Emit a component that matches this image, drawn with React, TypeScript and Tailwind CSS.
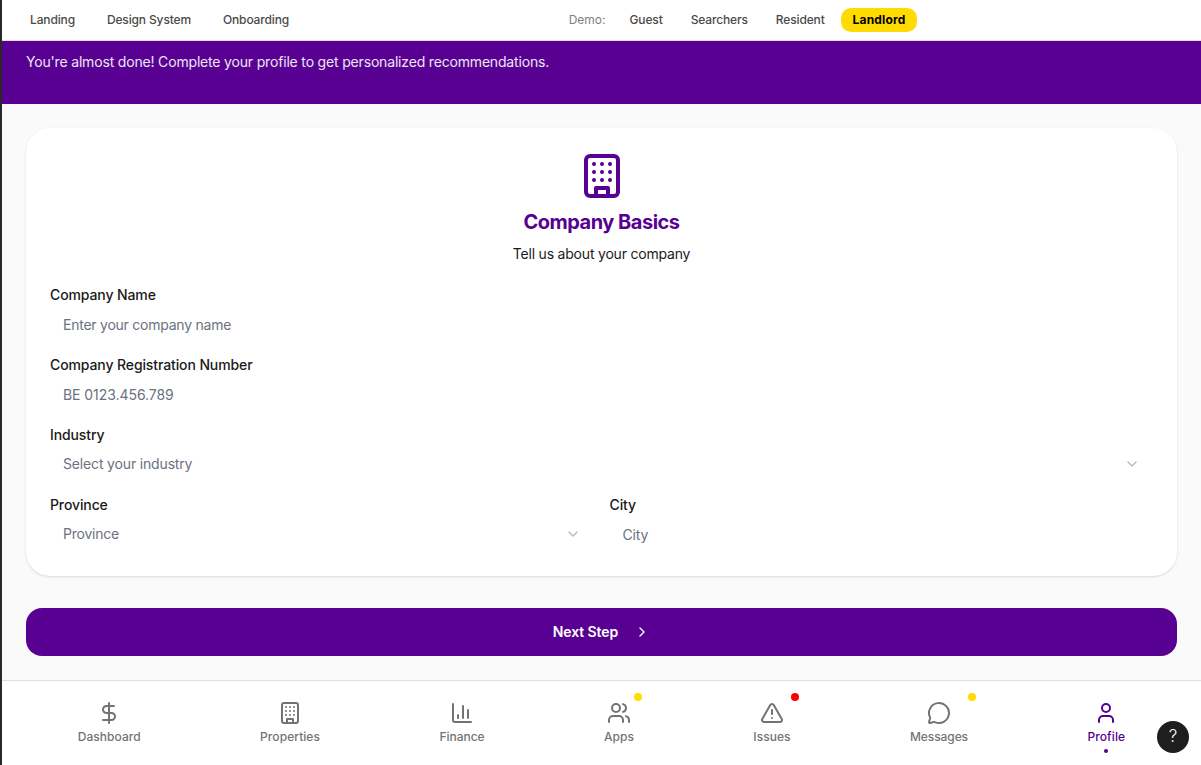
import React from "react";

type IconProps = { className?: string; children: React.ReactNode };

function Icon({ className = "size-6", children }: IconProps) {
  return (
    <svg
      viewBox="0 0 24 24"
      fill="none"
      stroke="currentColor"
      strokeWidth="2"
      strokeLinecap="round"
      strokeLinejoin="round"
      className={className}
    >
      {children}
    </svg>
  );
}

const building = (
  <>
    <rect width="16" height="20" x="4" y="2" rx="2" ry="2" />
    <path d="M9 22v-4h6v4" />
    <path d="M8 6h.01M16 6h.01M12 6h.01M12 10h.01M12 14h.01M16 10h.01M16 14h.01M8 10h.01M8 14h.01" />
  </>
);
const dollar = (
  <>
    <path d="M12 2v20" />
    <path d="M17 5H9.5a3.5 3.5 0 0 0 0 7h5a3.5 3.5 0 0 1 0 7H6" />
  </>
);
const chart = (
  <>
    <path d="M3 3v16a2 2 0 0 0 2 2h16" />
    <path d="M18 17V9M13 17V5M8 17v-3" />
  </>
);
const users = (
  <>
    <path d="M16 21v-2a4 4 0 0 0-4-4H6a4 4 0 0 0-4 4v2" />
    <path d="M16 3.128a4 4 0 0 1 0 7.744" />
    <path d="M22 21v-2a4 4 0 0 0-3-3.87" />
    <circle cx="9" cy="7" r="4" />
  </>
);
const alert = (
  <>
    <path d="m21.73 18-8-14a2 2 0 0 0-3.48 0l-8 14A2 2 0 0 0 4 21h16a2 2 0 0 0 1.73-3" />
    <path d="M12 9v4M12 17h.01" />
  </>
);
const message = (
  <path d="M2.992 16.342a2 2 0 0 1 .094 1.167l-1.065 3.29a1 1 0 0 0 1.236 1.168l3.413-.998a2 2 0 0 1 1.099.092 10 10 0 1 0-4.777-4.719" />
);
const user = (
  <>
    <path d="M19 21v-2a4 4 0 0 0-4-4H9a4 4 0 0 0-4 4v2" />
    <circle cx="12" cy="7" r="4" />
  </>
);

const tabs = [
  { label: "Dashboard", icon: dollar, badge: "", tracking: "tracking-[0.04px]" },
  { label: "Properties", icon: building, badge: "", tracking: "tracking-[0.06px]" },
  { label: "Finance", icon: chart, badge: "", tracking: "tracking-[-0.02px]" },
  { label: "Apps", icon: users, badge: "bg-[#ffdb00]", tracking: "tracking-normal" },
  { label: "Issues", icon: alert, badge: "bg-[#ff0000]", tracking: "tracking-[0.04px]" },
  { label: "Messages", icon: message, badge: "bg-[#ffdb00]", tracking: "tracking-[-0.08px]" },
  { label: "Profile", icon: user, badge: "", tracking: "tracking-[0.1px]", active: true },
];

function TopBar() {
  return (
    <header className="flex h-[41px] shrink-0 items-center justify-between border-b border-[#e0e0e0] bg-white px-4 text-xs tracking-[-0.14px] text-[#4a4a4a]">
      <nav className="flex gap-2">
        {["Landing", "Design System", "Onboarding"].map((t) => (
          <button key={t} className="px-3 py-1 font-medium">{t}</button>
        ))}
      </nav>
      <nav className="flex items-center gap-1">
        <span className="mr-2 tracking-normal text-[#808080]">Demo:</span>
        {["Guest", "Searchers", "Resident"].map((t) => (
          <button key={t} className="px-3 py-1 font-medium">{t}</button>
        ))}
        <button className="rounded-[10px] bg-[#ffdb00] px-3 py-1 font-bold tracking-[0.15px] text-black">
          Landlord
        </button>
      </nav>
      <div />
    </header>
  );
}

type FieldProps = {
  label: string;
  placeholder: string;
  select?: boolean;
  tracking?: string;
};

function Field({ label, placeholder, select, tracking = "tracking-[-0.16px]" }: FieldProps) {
  return (
    <div className="flex flex-col gap-1">
      <label className="text-sm leading-none font-medium tracking-[-0.11px] text-[#1a1a1a]">{label}</label>
      {select ? (
        <button className={`flex h-9 items-center justify-between px-[13px] text-sm text-[#6b7280] ${tracking}`}>
          <span>{placeholder}</span>
          <Icon className="size-4 text-[#b5b8bf]">
            <path d="m6 9 6 6 6-6" />
          </Icon>
        </button>
      ) : (
        <input
          className={`h-9 w-full px-[13px] text-sm outline-none placeholder:text-[#6b7280] ${tracking}`}
          placeholder={placeholder}
        />
      )}
    </div>
  );
}

export default function App() {
  return (
    <div className="relative flex h-[765px] w-full flex-col overflow-hidden border-l-2 border-[#29292b] bg-[#fafafa] font-['Inter',sans-serif]">
      <TopBar />
      <div className="h-[63px] shrink-0 bg-[#570091] px-6 pt-[11px] text-sm tracking-[-0.175px] text-white/90">
        You're almost done! Complete your profile to get personalized recommendations.
      </div>
      <main className="flex flex-1 flex-col gap-8 p-6">
        <section className="flex flex-col gap-6 rounded-3xl bg-white p-6 shadow-sm">
          <div className="flex flex-col items-center gap-2">
            <Icon className="size-12 text-[#570091]">{building}</Icon>
            <h1 className="text-xl leading-7 font-bold tracking-[-0.5px] text-[#570091]">Company Basics</h1>
            <p className="text-sm tracking-[-0.2px] text-[#1a1a1a]">Tell us about your company</p>
          </div>
          <div className="flex flex-col gap-4">
            <Field label="Company Name" placeholder="Enter your company name" tracking="tracking-[-0.24px]" />
            <Field label="Company Registration Number" placeholder="BE 0123.456.789" tracking="tracking-[-0.06px]" />
            <Field label="Industry" placeholder="Select your industry" select />
            <div className="grid grid-cols-2 gap-4">
              <Field label="Province" placeholder="Province" tracking="tracking-[-0.22px]" select />
              <Field label="City" placeholder="City" />
            </div>
          </div>
        </section>
        <button className="flex h-12 items-center justify-center gap-4 rounded-2xl bg-[#570091] text-sm font-semibold tracking-[-0.1px] text-white">
          Next Step
          <Icon className="size-4">
            <path d="m9 18 6-6-6-6" />
          </Icon>
        </button>
      </main>
      <nav className="flex h-[85px] shrink-0 items-start justify-around border-t border-[#e0e0e0] bg-white px-4 pt-2">
        {tabs.map((t) => (
          <button
            key={t.label}
            className={`relative flex flex-col items-center gap-1 p-3 text-xs font-medium ${t.tracking} ${t.active ? "text-[#570091]" : "text-[#737373]"}`}
          >
            <Icon>{t.icon}</Icon>
            <span>{t.label}</span>
            {t.badge && <span className={`absolute top-1 right-1 size-2 rounded-full ${t.badge}`} />}
            {t.active && <span className="absolute bottom-1 left-1/2 size-1 -translate-x-1/2 rounded-full bg-[#570091]" />}
          </button>
        ))}
      </nav>
      <button className="absolute right-3 bottom-3 flex size-8 items-center justify-center rounded-full bg-[#1e1e1e] text-[17px] font-light text-white">
        ?
      </button>
    </div>
  );
}
